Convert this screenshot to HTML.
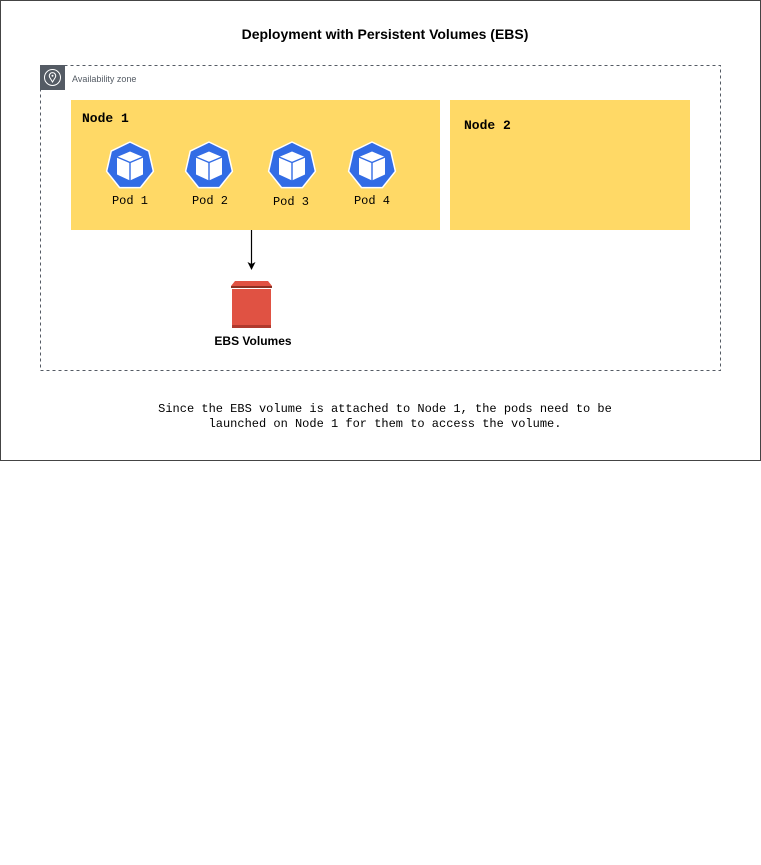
<!DOCTYPE html>
<html><head><meta charset="utf-8"><style>
html,body{margin:0;padding:0;background:#fff;width:761px;height:865px;overflow:hidden}
</style></head><body>
<svg width="761" height="865" xmlns="http://www.w3.org/2000/svg">
<defs>
<g id="pod">
<polygon points="0,-24 18.76,-14.96 23.4,5.34 10.41,21.62 -10.41,21.62 -23.4,5.34 -18.76,-14.96" fill="#326ce5" stroke="#fff" stroke-width="1.5" stroke-linejoin="round"/>
<polygon points="0,-14.5 13,-9 13,8.5 0,14.5 -13,8.5 -13,-9" fill="#fff"/>
<polyline points="-13,-9 0,-3.5 13,-9" fill="none" stroke="#326ce5" stroke-width="1.4"/>
<line x1="0" y1="-3.5" x2="0" y2="14.5" stroke="#326ce5" stroke-width="1.4"/>
</g>
</defs>
<rect x="0.5" y="0.5" width="760" height="460" fill="#fff" stroke="#444" stroke-width="1"/>
<text x="385" y="39" text-anchor="middle" font-family="Liberation Sans, sans-serif" font-weight="bold" font-size="14" fill="#000">Deployment with Persistent Volumes (EBS)</text>
<rect x="40.5" y="65.5" width="680" height="305" fill="none" stroke="#545b64" stroke-dasharray="3,3"/>
<rect x="40" y="65" width="25" height="25" fill="#545b64"/>
<circle cx="52.5" cy="77.5" r="8" fill="none" stroke="#fff" stroke-width="1"/>
<path d="M52.5,82 L49.5,77 A3.2,3.2 0 1 1 55.5,77 Z" fill="none" stroke="#fff" stroke-width="1"/>
<circle cx="52.5" cy="75.8" r="1" fill="#fff"/>
<text x="72" y="82" font-family="Liberation Sans, sans-serif" font-size="9" fill="#545b64">Availability zone</text>
<rect x="71" y="100" width="369" height="130" fill="#ffd966"/>
<rect x="450" y="100" width="240" height="130" fill="#ffd966"/>
<text x="82" y="122" font-family="Liberation Mono, monospace" font-weight="bold" font-size="13">Node 1</text>
<text x="464" y="129" font-family="Liberation Mono, monospace" font-weight="bold" font-size="13">Node 2</text>
<use href="#pod" x="130" y="166"/>
<use href="#pod" x="209" y="166"/>
<use href="#pod" x="292" y="166"/>
<use href="#pod" x="372" y="166"/>
<g font-family="Liberation Mono, monospace" font-size="12" text-anchor="middle" fill="#000">
<text x="130" y="204">Pod 1</text>
<text x="210" y="204">Pod 2</text>
<text x="291" y="205">Pod 3</text>
<text x="372" y="204">Pod 4</text>
</g>
<line x1="251.5" y1="230" x2="251.5" y2="264" stroke="#000" stroke-width="1.2"/>
<path d="M247.5,262 L251.5,270 L255.5,262 L251.5,264 Z" fill="#000"/>
<path d="M235,281 L268,281 L272,286 L231,286 Z" fill="#e05243"/>
<rect x="231" y="286" width="41" height="2" fill="#8c3123"/>
<rect x="232" y="289" width="39" height="36" fill="#e05243"/>
<rect x="232" y="325" width="39" height="3" fill="#b0392d"/>
<text x="253" y="345" text-anchor="middle" font-family="Liberation Sans, sans-serif" font-weight="bold" font-size="12">EBS Volumes</text>
<g font-family="Liberation Mono, monospace" font-size="12" text-anchor="middle" fill="#000">
<text x="385" y="412">Since the EBS volume is attached to Node 1, the pods need to be</text>
<text x="385" y="427">launched on Node 1 for them to access the volume.</text>
</g>
</svg>
</body></html>
